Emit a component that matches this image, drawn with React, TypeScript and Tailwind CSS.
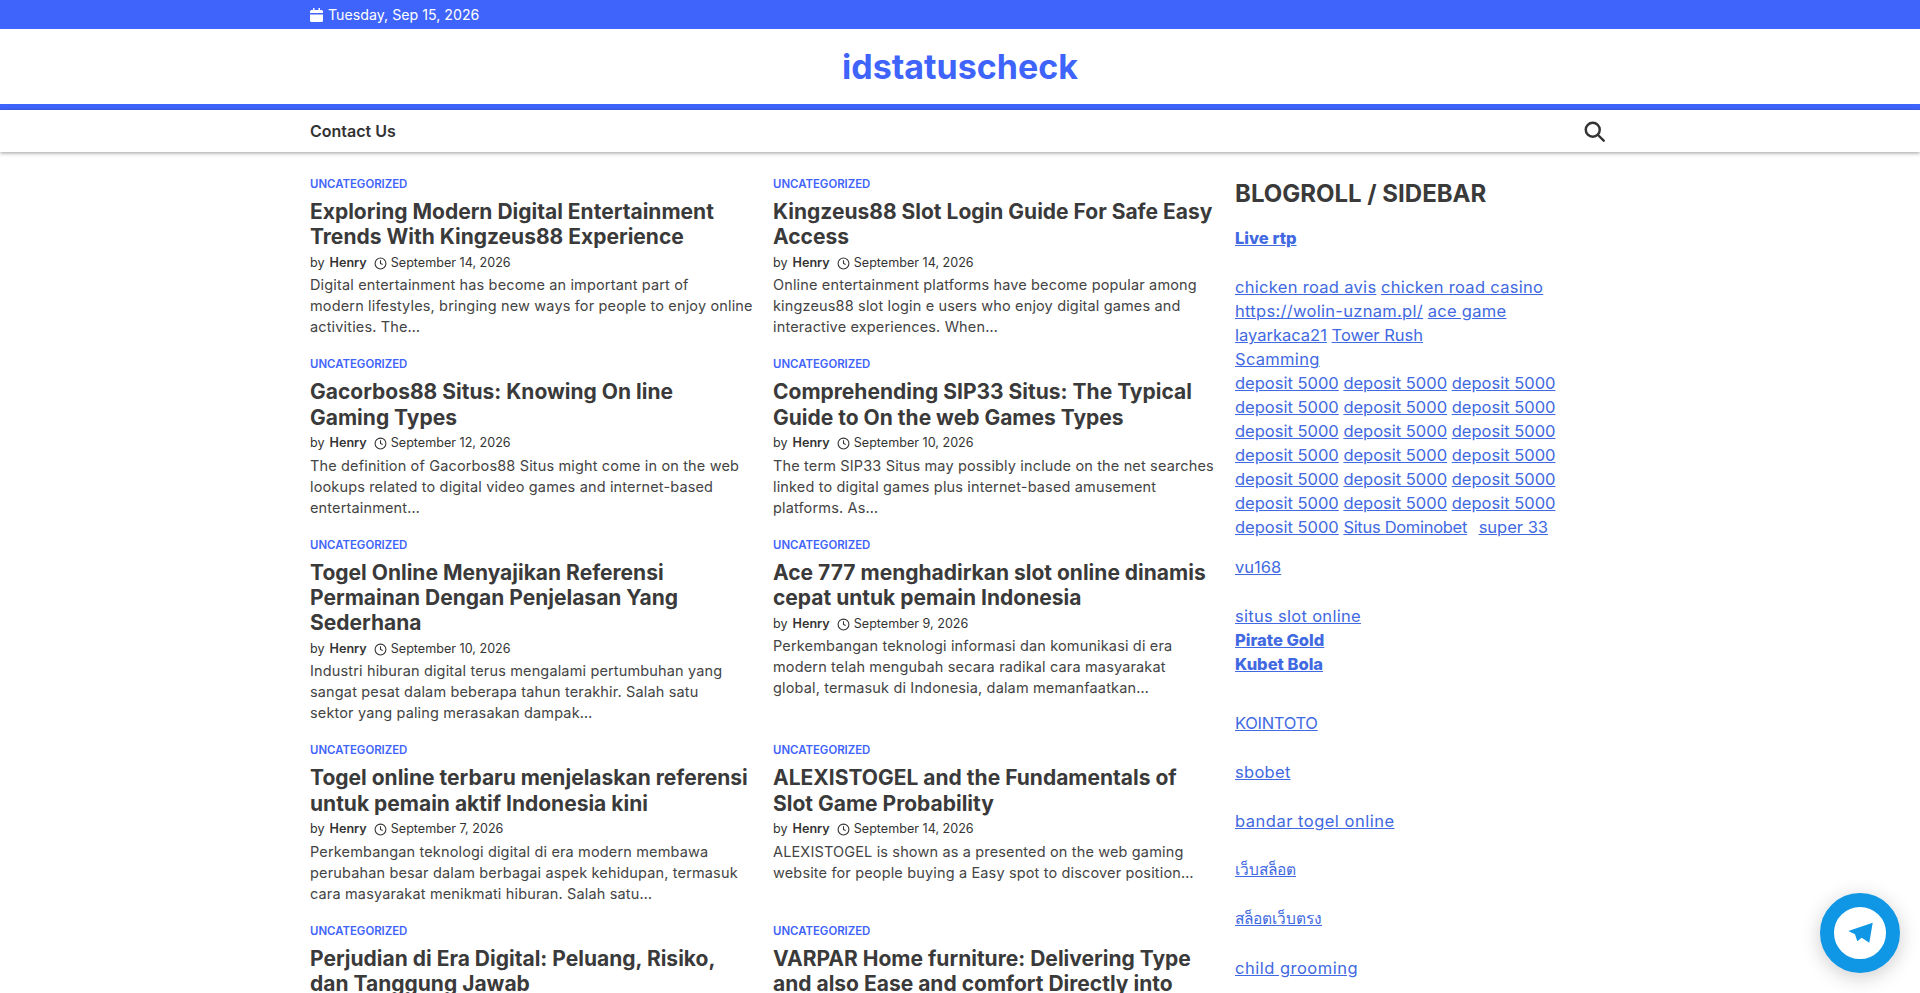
const POSTS = [
  {
    title: "Exploring Modern Digital Entertainment Trends With Kingzeus88 Experience",
    date: "September 14, 2026",
    excerpt:
      "Digital entertainment has become an important part of\nmodern lifestyles, bringing new ways for people to enjoy online\nactivities. The…",
  },
  {
    title: "Kingzeus88 Slot Login Guide For Safe Easy Access",
    date: "September 14, 2026",
    excerpt:
      "Online entertainment platforms have become popular among\nkingzeus88 slot login e users who enjoy digital games and\ninteractive experiences. When…",
  },
  {
    title: "Gacorbos88 Situs: Knowing On line Gaming Types",
    date: "September 12, 2026",
    excerpt:
      "The definition of Gacorbos88 Situs might come in on the web\nlookups related to digital video games and internet-based\nentertainment…",
  },
  {
    title: "Comprehending SIP33 Situs: The Typical Guide to On the web Games Types",
    date: "September 10, 2026",
    excerpt:
      "The term SIP33 Situs may possibly include on the net searches\nlinked to digital games plus internet-based amusement\nplatforms. As…",
  },
  {
    title: "Togel Online Menyajikan Referensi Permainan Dengan Penjelasan Yang Sederhana",
    date: "September 10, 2026",
    excerpt:
      "Industri hiburan digital terus mengalami pertumbuhan yang\nsangat pesat dalam beberapa tahun terakhir. Salah satu\nsektor yang paling merasakan dampak…",
  },
  {
    title: "Ace 777 menghadirkan slot online dinamis cepat untuk pemain Indonesia",
    date: "September 9, 2026",
    excerpt:
      "Perkembangan teknologi informasi dan komunikasi di era\nmodern telah mengubah secara radikal cara masyarakat\nglobal, termasuk di Indonesia, dalam memanfaatkan…",
  },
  {
    title: "Togel online terbaru menjelaskan referensi untuk pemain aktif Indonesia kini",
    date: "September 7, 2026",
    excerpt:
      "Perkembangan teknologi digital di era modern membawa\nperubahan besar dalam berbagai aspek kehidupan, termasuk\ncara masyarakat menikmati hiburan. Salah satu…",
  },
  {
    title: "ALEXISTOGEL and the Fundamentals of Slot Game Probability",
    date: "September 14, 2026",
    excerpt:
      "ALEXISTOGEL is shown as a presented on the web gaming\nwebsite for people buying a Easy spot to discover position…",
  },
  {
    title: "Perjudian di Era Digital: Peluang, Risiko, dan Tanggung Jawab",
    date: "September 7, 2026",
    excerpt: "",
  },
  {
    title: "VARPAR Home furniture: Delivering Type and also Ease and comfort Directly into",
    date: "September 7, 2026",
    excerpt: "",
  },
]

function Post({ title, date, excerpt }: { title: string; date: string; excerpt: string }) {
  return (
    <article className="pb-[19px]">
      <a className="block text-[11.4px] leading-[16px] font-semibold uppercase text-[#3f64fb]">Uncategorized</a>
      <h2 className="mt-[7px] text-[21px] leading-[25.2px] font-bold text-[#3a3a3a]">{title}</h2>
      <div className="mt-[3px] flex h-[22px] items-center text-[12.6px] text-[#333]">
        <span>by</span>
        <span className="ml-[5px] font-semibold">Henry</span>
        <svg className="ml-[7px] h-[13px] w-[13px]" viewBox="0 0 24 24" fill="none" stroke="currentColor" strokeWidth="2">
          <circle cx="12" cy="12" r="10" />
          <path d="M12 6v6l4 2" />
        </svg>
        <span className="ml-[4px]">{date}</span>
      </div>
      <p className="text-[14.5px] leading-[21px] tracking-[0.15px] whitespace-pre text-[#444]">{excerpt}</p>
    </article>
  )
}

function SideLink({ children, bold, className = "tracking-[0.3px]" }: { children: React.ReactNode; bold?: boolean; className?: string }) {
  return <a className={`text-[#4169e1] underline ${bold ? "font-extrabold" : ""} ${className}`}>{children}</a>
}

export default function App() {
  const deposits = Array.from({ length: 19 }, (_, i) => i)
  return (
    <div className="h-screen overflow-hidden bg-white font-['Inter',sans-serif] text-[#333]">
      <div className="h-[29px] bg-[#3f64fb] text-white">
        <div className="mx-auto flex h-full w-[1300px] items-center gap-[5px] text-[14.2px]">
          <svg className="h-[14px] w-[13px]" viewBox="0 0 13 14" fill="currentColor">
            <path d="M3 0h1.5v2h4V0H10v2h1.5A1.5 1.5 0 0 1 13 3.5V5H0V3.5A1.5 1.5 0 0 1 1.5 2H3z" />
            <path d="M0 6.5h13v6a1.5 1.5 0 0 1-1.5 1.5h-10A1.5 1.5 0 0 1 0 12.5z" />
          </svg>
          <span>Tuesday, Sep 15, 2026</span>
        </div>
      </div>
      <header className="flex h-[75px] items-center justify-center">
        <a className="text-[34px] font-bold text-[#3f64fb]">idstatuscheck</a>
      </header>
      <div className="h-[6px] bg-[#3f64fb]" />
      <nav className="relative z-10 h-[42px] bg-white shadow-[0_1px_4px_rgba(0,0,0,0.4)]">
        <div className="mx-auto flex h-full w-[1300px] items-center justify-between">
          <a className="text-[16px] font-semibold text-[#333]">Contact Us</a>
          <svg className="mr-[5px] h-[21px] w-[21px]" viewBox="0 0 24 24" fill="none" stroke="#333" strokeWidth="2.8" strokeLinecap="round">
            <circle cx="10" cy="10" r="8" />
            <path d="M16 16l6.5 6.5" />
          </svg>
        </div>
      </nav>
      <main className="mx-auto grid w-[1300px] grid-cols-[910px_1fr] gap-x-[15px] pt-[24px]">
        <div className="grid grid-cols-2 gap-x-[16px]">
          {POSTS.map((p) => (
            <Post key={p.title} {...p} />
          ))}
        </div>
        <aside className="text-[16.5px] leading-[24px]">
          <h2 className="mb-[14px] text-[24px] leading-[36px] font-bold text-[#3a3a3a]">BLOGROLL / SIDEBAR</h2>
          <p><SideLink bold className="tracking-normal">Live rtp</SideLink></p>
          <p className="mt-[25px]">
            <SideLink>chicken road avis</SideLink> <SideLink>chicken road casino</SideLink><br />
            <SideLink>https://wolin-uznam.pl/</SideLink> <SideLink>ace game</SideLink><br />
            <SideLink className="tracking-normal">layarkaca21</SideLink> <SideLink className="tracking-normal">Tower Rush</SideLink><br />
            <SideLink>Scamming</SideLink><br />
            {deposits.map((i) => (
              <span key={i}>
                <SideLink className="tracking-normal">deposit 5000</SideLink>{(i + 1) % 3 === 0 ? <br /> : " "}
              </span>
            ))}
            <SideLink className="tracking-[-0.3px]">Situs Dominobet</SideLink> <SideLink className="ml-[7px] tracking-normal">super 33</SideLink>
          </p>
          <p className="mt-[16px]"><SideLink className="tracking-normal">vu168</SideLink></p>
          <p className="mt-[25px]"><SideLink>situs slot online</SideLink></p>
          <p><SideLink bold className="tracking-normal">Pirate Gold</SideLink></p>
          <p><SideLink bold className="tracking-normal">Kubet Bola</SideLink></p>
          <p className="mt-[35px]"><SideLink className="tracking-[-0.3px]">KOINTOTO</SideLink></p>
          <p className="mt-[25px]"><SideLink>sbobet</SideLink></p>
          <p className="mt-[25px]"><SideLink className="tracking-[0.5px]">bandar togel online</SideLink></p>
          <p className="mt-[24px]"><SideLink className="text-[15.5px] tracking-normal">เว็บสล็อต</SideLink></p>
          <p className="mt-[24px]"><SideLink className="text-[15.5px] tracking-normal">สล็อตเว็บตรง</SideLink></p>
          <p className="mt-[25px]"><SideLink className="tracking-[0.5px]">child grooming</SideLink></p>
        </aside>
      </main>
      <a className="fixed right-[20px] bottom-[20px] flex h-[80px] w-[80px] items-center justify-center rounded-full border-[14px] border-[#0f97e6] bg-white shadow-[0_4px_20px_rgba(0,0,0,0.2)]">
        <svg className="h-[26px] w-[26px]" viewBox="0 0 26 26" fill="#0f97e6">
          <path d="M25.7 2.7 L1.3 11 L8 14.3 L10.3 21.3 L14.7 17.7 L22.3 22.7 Z" />
        </svg>
      </a>
    </div>
  )
}
